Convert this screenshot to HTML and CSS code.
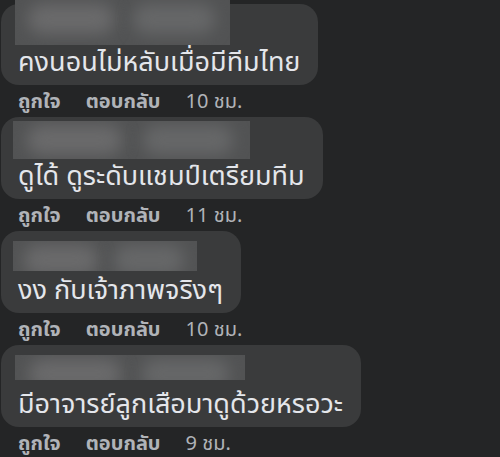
FILE: index.html
```html
<!DOCTYPE html>
<html lang="th">
<head>
  <meta charset="UTF-8">
  <meta name="viewport" content="width=device-width, initial-scale=1.0">
  <title>ความคิดเห็น</title>
  <link rel="stylesheet" href="styles.css">
</head>
<body>
  <div class="comments">
    <div class="comment first">
      <div class="bubble">
        <div class="name name-1"><span class="blot a"></span><span class="blot b"></span></div>
        <div class="text">คงนอนไม่หลับเมื่อมีทีมไทย</div>
      </div>
      <div class="actions">
        <span class="link">ถูกใจ</span>
        <span class="link">ตอบกลับ</span>
        <span class="time">10 ชม.</span>
      </div>
    </div>
    <div class="comment">
      <div class="bubble">
        <div class="name name-2"><span class="blot a"></span><span class="blot b"></span></div>
        <div class="text">ดูได้ ดูระดับแชมป์เตรียมทีม</div>
      </div>
      <div class="actions">
        <span class="link">ถูกใจ</span>
        <span class="link">ตอบกลับ</span>
        <span class="time">11 ชม.</span>
      </div>
    </div>
    <div class="comment">
      <div class="bubble">
        <div class="name name-3"><span class="blot a"></span><span class="blot b"></span></div>
        <div class="text">งง กับเจ้าภาพจริงๆ</div>
      </div>
      <div class="actions">
        <span class="link">ถูกใจ</span>
        <span class="link">ตอบกลับ</span>
        <span class="time">10 ชม.</span>
      </div>
    </div>
    <div class="comment">
      <div class="bubble">
        <div class="name name-4"><span class="blot a"></span><span class="blot b"></span></div>
        <div class="text">มีอาจารย์ลูกเสือมาดูด้วยหรอวะ</div>
      </div>
      <div class="actions">
        <span class="link">ถูกใจ</span>
        <span class="link">ตอบกลับ</span>
        <span class="time">9 ชม.</span>
      </div>
    </div>
  </div>
</body>
</html>
```

FILE: styles.css
```css
body {
  margin: 0;
  background-color: #242526;
  font-family: Tahoma, "Noto Sans", "Noto Sans Thai", sans-serif;
  overflow: hidden;
}
.comments {
  padding: 4px 0 0 1px;
}
.comment {
  display: flex;
  flex-direction: column;
  align-items: flex-start;
}
.bubble {
  background-color: #3a3b3c;
  border-radius: 18px;
  padding: 4px 18px 9px 12px;
}
.first .bubble {
  padding-top: 0;
}
.name {
  position: relative;
  height: 38px;
  background-color: #525354;
  overflow: hidden;
}
.blot {
  position: absolute;
  top: 4px;
  height: 30px;
  border-radius: 14px;
  background-color: #6a6a6b;
  filter: blur(8px);
}
.blot.a { left: 6%; width: 40%; }
.blot.b { left: 55%; width: 38%; background-color: #666768; }
.name-1 { width: 215px; margin: -4px 0 0 2px; height: 45px; }
.name-2 { width: 237px; }
.name-3 { width: 184px; height: 30px; margin: 6px 0 2px; }
.name-4 { width: 230px; height: 25px; margin: 6px 0 7px 2px; }
.text {
  padding-left: 5px;
  color: #e4e6eb;
  font-size: 27px;
  line-height: 31px;
  white-space: nowrap;
}
.actions {
  display: flex;
  gap: 25px;
  padding: 6px 0 6px 17px;
  font-size: 20px;
  line-height: 20px;
  color: #b0b3b8;
}
.link {
  font-weight: bold;
}
```
